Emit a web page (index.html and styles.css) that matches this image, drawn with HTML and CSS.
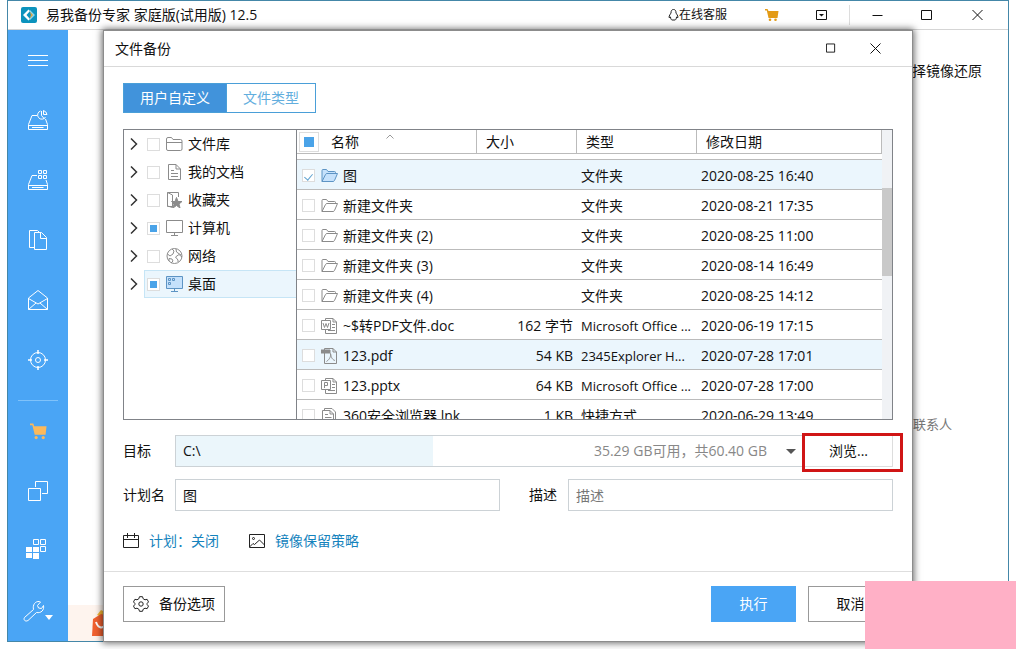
FILE: index.html
```html
<!DOCTYPE html>
<html lang="zh-CN">
<head>
<meta charset="utf-8">
<title>易我备份专家</title>
<link rel="stylesheet" href="styles.css">
</head>
<body>
<svg class="sprites" aria-hidden="true">
  <symbol id="chevron" viewBox="0 0 8 12"><path d="M1 .5 6.500 6 1 11.500" stroke="#333" stroke-width="1.500"/></symbol>
  <symbol id="folder-open" viewBox="0 0 17 14"><path d="M1 12.500V1.500Q1 .5 2 .5H5.500L7 2.500H13.500Q14.500 2.500 14.500 3.500V4.500M1 12.500 4.500 5.500Q5 4.500 6 4.500H16.500L13.500 11.500Q13 12.500 12 12.500Z"/></symbol>
  <symbol id="doc" viewBox="0 0 17 16"><path d="M2.500 .5H10L14.500 5V15.500H2.500ZM10 .5V5H14.500M5 6.500H8M5 9.500H12M5 12.500H12"/></symbol>
  <symbol id="close" viewBox="0 0 11 11"><path d="M.5 .5 10.500 10.500M10.500 .5 .5 10.500" stroke="#111"/></symbol>
  <symbol id="maximize" viewBox="0 0 11 11"><path d="M.5 .5H9.500V9.500H.5Z" stroke="#111"/></symbol>
  <symbol id="cart" viewBox="0 0 18 18"><path d="M0 1H3.500L4.500 4H17.500L16.500 13H5L2.500 3H0Z"/><circle cx="6.500" cy="16" r="1.700"/><circle cx="14" cy="16" r="1.700"/></symbol>
</svg>

<div class="window">
  <header class="titlebar">
    <svg class="logo" viewBox="0 0 16 16"><rect width="16" height="16" rx="2" fill="#0c93bd"/><path d="M7.500 2.500 2 8 7.500 13.500 9 12 5.500 8 9 4Z" fill="#fff"/><path d="M9 3 14 8 9 13V11L11.500 8 9 5Z" fill="#8fd6ea"/><path d="M8.500 4.500 12 8 8.500 11.500 10 8Z" fill="#e8a33c"/></svg>
    <h1 class="app-title">易我备份专家 家庭版(试用版) 12.5</h1>
    <a class="support" href="#"><svg width="11" height="12" viewBox="0 0 11 12"><path d="M5.500 .5C3.500 .5 3 2 3 4 2.500 5 1 6.500 1 8.500L2.500 8C2.500 9.500 3.200 10.500 3.800 11H7.200C7.800 10.500 8.500 9.500 8.500 8L10 8.500C10 6.500 8.500 5 8 4 8 2 7.500 .5 5.500 .5Z" stroke="#222"/></svg>在线客服</a>
    <button class="win-btn cart-small" aria-label="购买"><svg width="14" height="12" viewBox="0 0 14 12"><path d="M0 0H2.500L3.500 2H13.500L12.500 9H3.500L1.800 1.500H0Z"/><circle cx="5" cy="10.700" r="1.300"/><circle cx="10.500" cy="10.700" r="1.300"/></svg></button>
    <button class="win-btn" aria-label="菜单"><svg width="12" height="10" viewBox="0 0 12 10"><path d="M.5 .5H10.500V9.500H.5Z" stroke="#111"/><path d="M3 4H8L5.500 6.500Z" fill="#111"/></svg></button>
    <span class="title-divider"></span>
    <button class="win-btn" aria-label="最小化"><svg width="11" height="12" viewBox="0 0 11 12"><path d="M.5 6.500H10.500" stroke="#111"/></svg></button>
    <button class="win-btn" aria-label="最大化"><svg width="12" height="12" viewBox="0 0 12 12"><path d="M.5 1.500H10.500V10.500H.5Z" stroke="#111"/></svg></button>
    <button class="win-btn" aria-label="关闭"><svg width="11" height="12" viewBox="0 0 11 12"><path d="M.5 1 10.500 11M10.500 1 .5 11" stroke="#111"/></svg></button>
  </header>

  <div class="workspace">
    <nav class="sidebar">
      <button aria-label="展开"><svg width="20" height="12" viewBox="0 0 20 12"><path d="M0 1.500H20M0 6.500H20M0 11.500H20"/></svg></button>
      <button aria-label="磁盘备份"><svg width="20" height="20" viewBox="0 0 20 20"><path d="M9 5.500H4L.5 14.500V19.500H19.500V14.500L17.500 9M.5 15.500H19.500M4 17.500H15.500M12.500 1A4.200 4.200 0 1 0 17.500 7M13.500 1V5.500L16.500 9M15.500 .5V4.500H19Q18.500 1.500 15.500 .5"/></svg></button>
      <button aria-label="系统备份"><svg width="20" height="20" viewBox="0 0 20 20"><path d="M9 5.500H4L.5 14.500V19.500H19.500V14.500L18 10M.5 15.500H19.500M4 17.500H15.500M10.500 .5H13.500V3.500H10.500ZM15.500 .5H18.500V3.500H15.500ZM10.500 5.500H13.500V8.500H10.500ZM15.500 5.500H18.500V8.500H15.500Z"/></svg></button>
      <button aria-label="文件备份"><svg width="20" height="20" viewBox="0 0 20 20"><path d="M6 17.500H1.500V.5H9.500L11 2M6.500 2.500H13.500L18.500 7.500V19.500H6.500ZM12.500 2.500V8.500H18.500"/></svg></button>
      <button aria-label="邮件备份"><svg width="20" height="20" viewBox="0 0 20 20"><path d="M10 .5 19.500 8V19.500H.5V8ZM.5 8.500 10 14 19.500 8.500M.5 19.500 8 13M19.500 19.500 12 13"/></svg></button>
      <button aria-label="智能备份"><svg width="20" height="20" viewBox="0 0 20 20"><circle cx="10" cy="10" r="7.500"/><circle cx="10" cy="10" r="2.500"/><path d="M10 0V4M10 16V20M0 10H4M16 10H20" stroke-width="1.500"/></svg></button>
      <hr>
      <button class="cart-large" aria-label="购买"><svg width="17" height="18"><use href="#cart"/></svg></button>
      <button aria-label="克隆"><svg width="20" height="20" viewBox="0 0 20 20"><path d="M.5 7.500H12.500V19.500H.5ZM7.500 6V.5H19.500V12.500H14"/></svg></button>
      <button aria-label="工具"><svg width="28" height="24" viewBox="0 0 28 24"><path d="M9.500 .5H14.500V5.500H9.500ZM16.500 .5H21.500V5.500H16.500ZM16.500 7.500H21.500V12.500H16.500Z"/><path fill="#fff" stroke="none" d="M2 8H8V13H2ZM9 8H15V13H9ZM2 14H8V19H2ZM9 14H15V20H9Z"/></svg></button>
      <button aria-label="设置"><svg width="30" height="22" viewBox="0 0 30 22"><path d="M1.500 17.500 10.500 9.500C9.500 5 12 1 16.500 1.500L17.500 2 14.500 5.500 15.500 8 18.500 8.500 20.500 5.500C21.500 10 18 13.500 13.500 12.500L5 20.500C2.500 22 0 20 1.500 17.500Z"/><path d="M22 15H30L26 20Z" fill="#fff" stroke="none"/></svg></button>
    </nav>
    <main class="backdrop">
      <p class="hint">择镜像还原</p>
      <p class="contact">联系人</p>
      <div class="promo"><svg width="20" height="27" viewBox="0 0 20 27"><path d="M5 5 9 0 15 3 13 8Z" fill="#f8b832"/><path d="M1 9 9 4 20 7V26H0Z" fill="#f0602f"/><path d="M4 12C6 18 10 19 14 15" fill="none" stroke="#fff" stroke-width="2"/></svg></div>
    </main>
  </div>
</div>

<section class="dialog" role="dialog" aria-labelledby="dialog-title">
  <header class="dialog-header">
    <h2 id="dialog-title">文件备份</h2>
    <button aria-label="最大化"><svg width="10" height="11"><use href="#maximize"/></svg></button>
    <button aria-label="关闭"><svg width="11" height="11"><use href="#close"/></svg></button>
  </header>

  <div class="dialog-body">
    <div class="tabs" role="tablist">
      <button class="tab tab-active" role="tab" aria-selected="true">用户自定义</button>
      <button class="tab" role="tab" aria-selected="false">文件类型</button>
    </div>

    <div class="browser">
      <ul class="tree">
        <li><svg class="arrow"><use href="#chevron"/></svg><label><input type="checkbox"><svg class="icon" viewBox="0 0 17 16"><path d="M.5 13V3Q.5 1.500 2 1.500H5.500L7 3.500H14.500Q16 3.500 16 5V13Q16 14.500 14.500 14.500H2Q.5 14.500 .5 13ZM.5 6.500H16"/></svg>文件库</label></li>
        <li><svg class="arrow"><use href="#chevron"/></svg><label><input type="checkbox"><svg class="icon"><use href="#doc"/></svg>我的文档</label></li>
        <li><svg class="arrow"><use href="#chevron"/></svg><label><input type="checkbox"><svg class="icon" viewBox="0 0 17 16"><path d="M7 14.500H1.500V.5H12.500V5M1.500 .5 6.500 3V15.500L1.500 14"/><path d="M10.500 5.500 12 9.500 16 9.500 13 12 14 16 10.500 13.500 7 16 8 12 5.500 9.500H9Z" fill="#8b8b8b"/></svg>收藏夹</label></li>
        <li><svg class="arrow"><use href="#chevron"/></svg><label><input type="checkbox" class="partial"><svg class="icon" viewBox="0 0 17 16"><path d="M.5 .5H16.500V12.500H.5ZM8.500 12.500V15M5 15.500H12"/></svg>计算机</label></li>
        <li><svg class="arrow"><use href="#chevron"/></svg><label><input type="checkbox"><svg class="icon" viewBox="0 0 17 16"><circle cx="8.500" cy="8" r="7.500"/><path d="M1.500 6 4 8 7 6 8 3 6 1M10 1 10.500 4 15 7M16 9 13 6.500 9.500 9 12 12V14M3 13V10.500L6 11 7 13 5 15"/></svg>网络</label></li>
        <li><svg class="arrow"><use href="#chevron"/></svg><label class="selected"><input type="checkbox" class="partial"><svg class="icon icon-blue" viewBox="0 0 17 16"><path d="M.5 .5H16.500V12.500H.5ZM8.500 12.500V15M5 15.500H12"/><path d="M2.500 2.500H4.500V4.500H2.500ZM6.500 2.500H8.500V4.500H6.500ZM2.500 6.500H4.500V8.500H2.500Z"/></svg>桌面</label></li>
      </ul>

      <div class="file-pane">
        <table class="files">
          <colgroup><col class="col-name"><col class="col-size"><col class="col-type"><col></colgroup>
          <thead>
            <tr>
              <th><div><input type="checkbox" class="partial check-all" aria-label="全选"><span>名称</span><svg class="sort" width="8" height="5" viewBox="0 0 8 5"><path d="M.5 4.500 4 1 7.500 4.500" stroke="#999"/></svg></div></th>
              <th><div>大小</div></th><th><div>类型</div></th><th><div>修改日期</div></th>
            </tr>
          </thead>
          <tbody>
            <tr class="picked"><td><label><input type="checkbox" class="ticked" checked><svg class="icon icon-blue folder"><use href="#folder-open"/></svg>图</label></td><td></td><td>文件夹</td><td>2020-08-25 16:40</td></tr>
            <tr><td><label><input type="checkbox"><svg class="icon folder"><use href="#folder-open"/></svg>新建文件夹</label></td><td></td><td>文件夹</td><td>2020-08-21 17:35</td></tr>
            <tr><td><label><input type="checkbox"><svg class="icon folder"><use href="#folder-open"/></svg>新建文件夹 (2)</label></td><td></td><td>文件夹</td><td>2020-08-25 11:00</td></tr>
            <tr><td><label><input type="checkbox"><svg class="icon folder"><use href="#folder-open"/></svg>新建文件夹 (3)</label></td><td></td><td>文件夹</td><td>2020-08-14 16:49</td></tr>
            <tr><td><label><input type="checkbox"><svg class="icon folder"><use href="#folder-open"/></svg>新建文件夹 (4)</label></td><td></td><td>文件夹</td><td>2020-08-25 14:12</td></tr>
            <tr><td><label><input type="checkbox"><svg class="icon" viewBox="0 0 17 16"><path d="M4.500 2V.5H12L15.500 4V15.500H4.500V12M12 .5V4H15.500M.5 2.500H9.500V11.500H.5ZM2 5 3.500 9.500 5 5.500 6.500 9.500 8 5M11 6.500H14M11 9.500H14M7 12.500H14"/></svg>~$转PDF文件.doc</label></td><td>162 字节</td><td class="app">Microsoft Office ...</td><td>2020-06-19 17:15</td></tr>
            <tr class="picked"><td><label><input type="checkbox"><svg class="icon" viewBox="0 0 17 16"><path d="M3.500 5V15.500H15.500V4L12 .5H3.500V2M12 .5V4H15.500M5.500 13.500C9 11 10 8 9.500 5.500 10 10 12 12 14 12.500"/><path d="M0 2H9V5H0Z" fill="#8b8b8b"/></svg>123.pdf</label></td><td>54 KB</td><td class="app">2345Explorer H...</td><td>2020-07-28 17:01</td></tr>
            <tr><td><label><input type="checkbox"><svg class="icon" viewBox="0 0 17 16"><path d="M4.500 2V.5H12L15.500 4V15.500H4.500V12M12 .5V4H15.500M.5 2.500H9.500V11.500H.5ZM3.500 10V4.500H6.500V7.500H3.500M11 6.500H14M11 9.500H14M7 12.500H14"/></svg>123.pptx</label></td><td>64 KB</td><td class="app">Microsoft Office ...</td><td>2020-07-28 17:00</td></tr>
            <tr><td><label><input type="checkbox"><svg class="icon" viewBox="0 0 17 16"><path d="M1.500 16V2.500H9L12.500 6V16M3.500 2V.5H11L14.500 4V16M9 2.500V6H12.500M4 6.500H7M4 9.500H10.500M4 12.500H10.500"/></svg>360安全浏览器.lnk</label></td><td>1 KB</td><td>快捷方式</td><td>2020-06-29 13:49</td></tr>
          </tbody>
        </table>
        <div class="scrollbar"><div class="thumb"></div></div>
      </div>
    </div>

    <div class="form">
      <label for="target">目标</label>
      <div class="target">
        <div class="drive">
          <select id="target"><option>C:\</option></select>
          <span class="usage">35.29 GB可用，共60.40 GB</span>
        </div>
        <button class="browse">浏览...</button>
      </div>
      <label for="plan">计划名</label>
      <input id="plan" type="text" value="图">
      <label for="desc">描述</label>
      <input id="desc" type="text" placeholder="描述">
    </div>

    <div class="links">
      <a href="#"><svg width="16" height="16" viewBox="0 0 16 16"><path d="M.5 2.500H15.500V14.500H.5ZM.5 6.500H15.500M4.500 0V5M11.500 0V5"/></svg>计划：关闭</a>
      <a href="#"><svg width="16" height="14" viewBox="0 0 16 14"><path d="M.5 .5H15.500V13.500H.5ZM.5 13 4 9.500 5.500 10.500 10.500 6 15.500 11"/><circle cx="4.500" cy="4.500" r="1"/></svg>镜像保留策略</a>
    </div>
  </div>

  <footer class="dialog-footer">
    <button class="options"><svg width="16" height="16" viewBox="0 0 16 16"><path d="M6.500 .7H9.500L10.200 2.800 12 3.800 14.100 3.300 15.500 5.900 14.100 7.500V8.500L15.500 10.100 14.100 12.700 12 12.200 10.200 13.200 9.500 15.300H6.500L5.800 13.200 4 12.200 1.900 12.700 .5 10.100 1.900 8.500V7.500L.5 5.900 1.900 3.300 4 3.800 5.800 2.800Z"/><circle cx="8" cy="8" r="2.200"/></svg>备份选项</button>
    <button class="primary">执行</button>
    <button>取消</button>
  </footer>
</section>
<div class="cover"></div>
</body>
</html>
```
FILE: styles.css
```css
* { box-sizing: border-box; }

body {
  margin: 0;
  height: 100vh;
  padding: 0 7px 7px;
  overflow: hidden;
  position: relative;
  background: #fff;
  color: #111;
  font: 14px/20px "Open Sans", "Noto Sans CJK SC", sans-serif;
}

h1, h2, p, ul { margin: 0; padding: 0; font-size: 14px; font-weight: 400; }
button, input, select { font: inherit; color: inherit; margin: 0; }
button { padding: 0; border: 0; background: none; }
svg { fill: none; flex: none; }
a { text-decoration: none; }
.sprites { position: absolute; width: 0; height: 0; }

/* Main window */
.window {
  height: 100%;
  display: flex;
  flex-direction: column;
  border: 1px solid #4487a8;
  background: #fff;
}
.titlebar {
  height: 29px;
  flex: none;
  display: flex;
  align-items: center;
  padding: 0 6px 0 13px;
  border-bottom: 1px solid #d5d5d5;
}
.logo { width: 16px; height: 16px; margin-right: 9px; }
.app-title { flex: 1; }
.support {
  display: flex;
  align-items: center;
  margin-right: 20px;
  color: #111;
  font-size: 12px;
}
.win-btn {
  width: 50px;
  height: 28px;
  display: flex;
  align-items: center;
  justify-content: center;
}
.cart-small svg { fill: #e39b16; }
.title-divider { width: 1px; height: 20px; margin: 0 2px; background: #ddd; }

.workspace { flex: 1; display: flex; min-height: 0; }
.sidebar {
  width: 60px;
  flex: none;
  display: flex;
  flex-direction: column;
  background: #4aa5f5;
}
.sidebar button {
  height: 60px;
  display: flex;
  align-items: center;
  justify-content: center;
}
.sidebar svg { stroke: #fff; }
.sidebar .cart-large svg { fill: #fbb95c; stroke: none; }
.sidebar hr {
  width: 40px;
  height: 1px;
  margin: 10px auto 0;
  border: 0;
  background: #7fc2fa;
}

.backdrop { flex: 1; display: flex; flex-direction: column; }
.hint { margin-top: 31px; padding-right: 26px; text-align: right; }
.contact {
  margin-top: 333px;
  padding-right: 56px;
  text-align: right;
  color: #777;
  font-size: 13px;
}
.promo {
  height: 36px;
  margin-top: auto;
  padding: 5px 24px;
  background: #fef4ee;
}

/* Dialog */
.dialog {
  position: absolute;
  top: 31px;
  right: 104px;
  bottom: 8px;
  left: 104px;
  display: flex;
  flex-direction: column;
  background: #fff;
  box-shadow: 0 0 0 1px #8c8c8c, 0 0 7px 2px rgba(0, 0, 0, .6);
}
.dialog-header {
  height: 36px;
  flex: none;
  display: flex;
  align-items: center;
  padding: 0 14px 0 11px;
  border-bottom: 1px solid #d9d9d9;
}
.dialog-header h2 { flex: 1; }
.dialog-header button {
  width: 45px;
  height: 34px;
  display: flex;
  align-items: center;
  justify-content: center;
}
.dialog-body {
  flex: 1;
  min-height: 0;
  display: flex;
  flex-direction: column;
  padding: 16px 19px 20px;
}

.tabs { display: flex; flex: none; margin-bottom: 16px; }
.tab {
  height: 30px;
  padding: 0 16px;
  border: 1px solid #4a9fd8;
  border-left: 0;
  color: #62aede;
}
.tab-active { border-left: 1px solid #4a9fd8; background: #4193db; color: #fff; }

.browser {
  flex: 1;
  min-height: 0;
  display: flex;
  border: 1px solid #808388;
  overflow: hidden;
}
.tree { width: 173px; flex: none; border-right: 1px solid #808388; list-style: none; }
.tree li { display: flex; align-items: center; height: 28px; padding-left: 6px; }
.arrow { width: 8px; height: 12px; }
.tree label {
  flex: 1;
  height: 28px;
  display: flex;
  align-items: center;
  margin-left: 6px;
  padding-left: 2px;
  border: 1px solid transparent;
  border-right: 0;
}
.tree label.selected { background: #ebf6fd; border-color: #c6e5f6; }

input[type="checkbox"] {
  appearance: none;
  width: 13px;
  height: 13px;
  flex: none;
  margin: 0 6px 0 0;
  border: 1px solid #ddd;
  background: #fff;
}
input.partial { background: linear-gradient(#4aa3e8, #4aa3e8) center / 7px 7px no-repeat #fff; }
input.ticked { display: grid; place-items: center; }
input.ticked::after {
  content: "";
  width: 4px;
  height: 7px;
  border: solid #60a3d0;
  border-width: 0 1px 1px 0;
  transform: rotate(40deg);
}
.icon { width: 17px; height: 16px; margin-right: 5px; stroke: #8b8b8b; }
.folder { height: 14px; }
.icon-blue { stroke: #5d94c4; fill: #c5e1fb; }

.file-pane { flex: 1; min-width: 0; display: flex; }
.files {
  flex: 1;
  width: 100%;
  table-layout: fixed;
  border-collapse: separate;
  border-spacing: 0;
  align-self: flex-start;
}
.col-name { width: 180px; }
.col-size { width: 100px; }
.col-type { width: 120px; }
th { padding: 0 0 5px; border-bottom: 1px solid #bbb; font-weight: 400; text-align: left; }
th div {
  height: 24px;
  display: flex;
  align-items: center;
  padding-left: 9px;
  border: solid #bbb;
  border-width: 0 1px 1px 0;
}
th:first-child div { padding-left: 2px; }
input[type="checkbox"].check-all {
  width: 20px;
  height: 20px;
  margin-right: 12px;
  background-size: 10px 10px;
}
.sort { align-self: flex-start; margin: 4px 0 0 27px; }
td { height: 30px; padding: 2px 4px 0; border-bottom: 1px solid #bbb; white-space: nowrap; }
td:nth-child(2) { text-align: right; }
td.app { font-size: 13px; }
td label { display: flex; align-items: center; padding-left: 1px; }
.picked td { background: #ebf6fd; }
.scrollbar { width: 10px; flex: none; padding-top: 58px; background: #f0f2f5; }
.thumb { height: 88px; background: #c9c9c9; }

/* Target and naming fields */
.form {
  flex: none;
  display: grid;
  grid-template-columns: 52px 1fr 68px 1fr;
  row-gap: 12px;
  align-items: center;
  margin-top: 15px;
}
.form label[for="desc"] { padding-left: 29px; }
.form input, .form select {
  width: 100%;
  height: 32px;
  padding: 0 7px;
  border: 1px solid #ccd2d6;
  border-radius: 0;
  background: #fff;
}
.form input::placeholder { color: #777; opacity: 1; }
.target { grid-column: 2 / -1; display: flex; }
.drive { flex: 1; position: relative; }
.form .drive select {
  display: block;
  appearance: none;
  background: linear-gradient(90deg, #ebf6fb 41%, #fff 41%);
}
.drive::after {
  content: "";
  position: absolute;
  top: 14px;
  right: 9px;
  border: 5px solid transparent;
  border-top-color: #555;
  border-bottom: 0;
}
.usage { position: absolute; top: 6px; right: 38px; color: #888; }
.browse {
  position: relative;
  width: 88px;
  height: 32px;
  border: 1px solid #ddd;
  border-left: 0;
}
.browse::after {
  content: "";
  position: absolute;
  inset: -3px -11px -6px -3px;
  border: 3px solid #d01515;
}

.links { flex: none; display: flex; gap: 30px; margin-top: 20px; }
.links a { display: flex; align-items: center; gap: 10px; color: #1583bd; }
.links svg { stroke: #222; }

.dialog-footer {
  flex: none;
  display: flex;
  gap: 12px;
  padding: 14px 19px 19px;
  border-top: 1px solid #dedede;
}
.dialog-footer button {
  width: 85px;
  height: 36px;
  border: 1px solid #999;
}
.dialog-footer .options {
  width: 102px;
  display: flex;
  align-items: center;
  justify-content: center;
  gap: 10px;
  margin-right: auto;
}
.options svg { stroke: #222; }
.dialog-footer .primary { background: #4aa5f5; border-color: #4aa5f5; color: #fff; }

.cover {
  position: absolute;
  right: 0;
  bottom: 0;
  width: 151px;
  height: 68px;
  background: #ffb0c6;
}
```
